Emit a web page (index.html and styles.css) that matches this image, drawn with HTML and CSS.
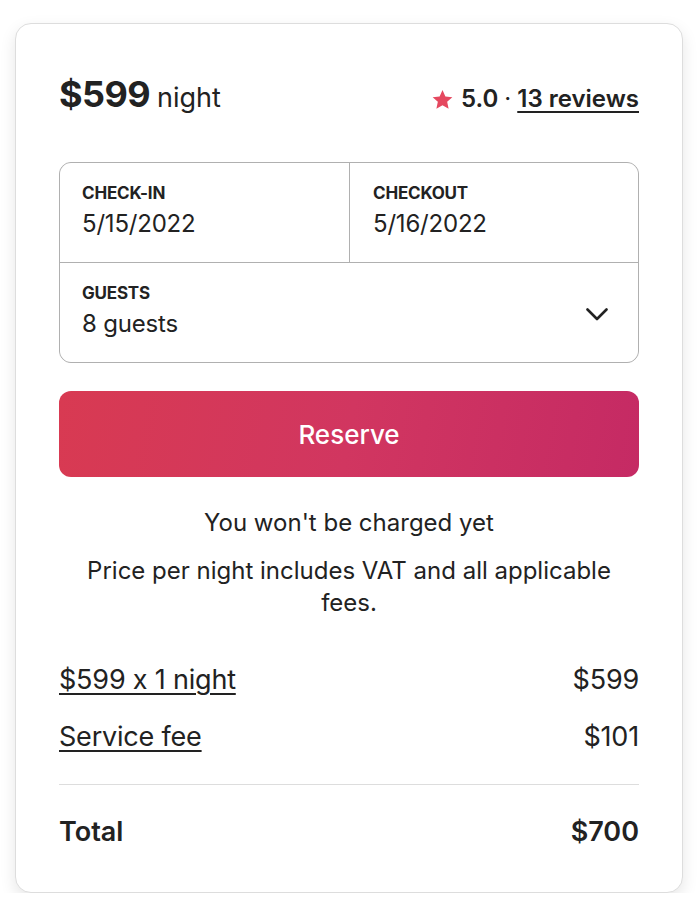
FILE: index.html
```html
<!DOCTYPE html>
<html lang="en">
<head>
<meta charset="utf-8">
<title>Reserve</title>
<link rel="stylesheet" href="styles.css">
</head>
<body>
<div class="card">
  <div class="header">
    <div class="price"><span class="amount">$599</span><span class="per">night</span></div>
    <div class="rating">
      <svg class="star" viewBox="0 0 32 32" aria-hidden="true"><path d="M16 1.6l4.4 9.7 10.6 1.1-7.9 7.2 2.2 10.4L16 24.7l-9.3 5.3 2.2-10.4L1 12.4l10.6-1.1z"/></svg>
      <span class="score">5.0</span><span class="dot">·</span><a class="reviews" href="#">13 reviews</a>
    </div>
  </div>

  <div class="dates">
    <div class="cell cell-in">
      <div class="label">CHECK-IN</div>
      <div class="value">5/15/2022</div>
    </div>
    <div class="cell cell-out">
      <div class="label">CHECKOUT</div>
      <div class="value">5/16/2022</div>
    </div>
    <div class="cell cell-guests">
      <div>
        <div class="label">GUESTS</div>
        <div class="value">8 guests</div>
      </div>
      <svg class="chevron" viewBox="0 0 22 13" aria-hidden="true"><polyline points="1.5,1.5 11,11 20.5,1.5"/></svg>
    </div>
  </div>

  <button class="reserve" type="button">Reserve</button>

  <p class="note note-first">You won't be charged yet</p>
  <p class="note note-second">Price per night includes VAT and all applicable fees.</p>

  <div class="line line-first"><a class="link" href="#">$599 x 1 night</a><span>$599</span></div>
  <div class="line"><a class="link" href="#">Service fee</a><span>$101</span></div>

  <div class="total"><span>Total</span><span>$700</span></div>
</div>
</body>
</html>
```

FILE: styles.css
```css
* { box-sizing: border-box; }

html, body {
  margin: 0;
  padding: 0;
  background: #ffffff;
}

body {
  font-family: Inter, "Noto Sans", "DejaVu Sans", sans-serif;
  font-feature-settings: "calt" 0;
  color: #222222;
}

.card {
  width: 668px;
  height: 870px;
  margin: 23px 0 0 15px;
  border: 1px solid #dddddd;
  border-radius: 16px;
  box-shadow: rgba(0, 0, 0, 0.10) 0 6px 16px;
  padding: 46px 43px 0 43px;
  background: #ffffff;
}

.header {
  display: flex;
  justify-content: space-between;
  align-items: baseline;
  height: 48px;
  margin-bottom: 44px;
  line-height: 48px;
}

.amount {
  font-size: 36px;
  font-weight: 700;
  letter-spacing: -0.6px;
}

.per {
  font-size: 27px;
  font-weight: 400;
  margin-left: 7px;
}

.rating {
  display: flex;
  align-items: baseline;
  font-size: 24px;
  font-weight: 600;
}

.star {
  width: 21px;
  height: 21px;
  fill: #e5485f;
  margin-right: 8px;
  align-self: center;
  position: relative;
  top: 0px;
}

.dot {
  margin: 0 6px;
  font-weight: 400;
}

.reviews {
  color: #222222;
  text-decoration: underline;
  text-decoration-thickness: 1.5px;
  text-underline-offset: 4px;
}

.dates {
  display: grid;
  grid-template-columns: 289px 1fr;
  grid-template-rows: 99px 99px;
  gap: 1px;
  background: #b0b0b0;
  border: 1px solid #b0b0b0;
  border-radius: 12px;
  overflow: hidden;
}

.cell {
  background: #ffffff;
  padding: 20px 22px 0 22px;
}

.cell-out {
  padding-left: 23px;
}

.cell-guests {
  grid-column: 1 / 3;
  display: flex;
  justify-content: space-between;
  align-items: center;
  padding-top: 0;
  padding-right: 30px;
}

.cell-guests > div {
  padding-top: 20px;
  align-self: flex-start;
}

.label {
  font-size: 17px;
  font-weight: 700;
  line-height: 20px;
  letter-spacing: -0.2px;
}

.value {
  font-size: 24px;
  line-height: 30px;
  margin-top: 6px;
  letter-spacing: -0.2px;
}

.chevron {
  width: 22px;
  height: 13px;
  fill: none;
  stroke: #222222;
  stroke-width: 2.6;
  stroke-linecap: round;
  stroke-linejoin: round;
  margin-top: 4px;
}

.reserve {
  display: block;
  width: 100%;
  height: 86px;
  margin-top: 28px;
  border: none;
  border-radius: 12px;
  background: linear-gradient(100deg, #d83a52 0%, #d13660 50%, #c52a64 100%);
  color: #ffffff;
  font-family: inherit;
  font-size: 26px;
  font-weight: 500;
}

.note {
  margin: 0;
  text-align: center;
  font-size: 24px;
  line-height: 32px;
}

.note-first {
  margin-top: 30px;
}

.note-second {
  margin-top: 16px;
}

.line {
  display: flex;
  justify-content: space-between;
  font-size: 27px;
  line-height: 32px;
  margin-top: 25px;
  letter-spacing: -0.2px;
}

.line-first {
  margin-top: 45px;
}

.link {
  color: #222222;
  text-decoration: underline;
  text-decoration-thickness: 1.5px;
  text-underline-offset: 4px;
}

.total {
  display: flex;
  justify-content: space-between;
  font-size: 27px;
  font-weight: 600;
  line-height: 32px;
  margin-top: 31px;
  padding-top: 31px;
  border-top: 1px solid #dddddd;
}
```
